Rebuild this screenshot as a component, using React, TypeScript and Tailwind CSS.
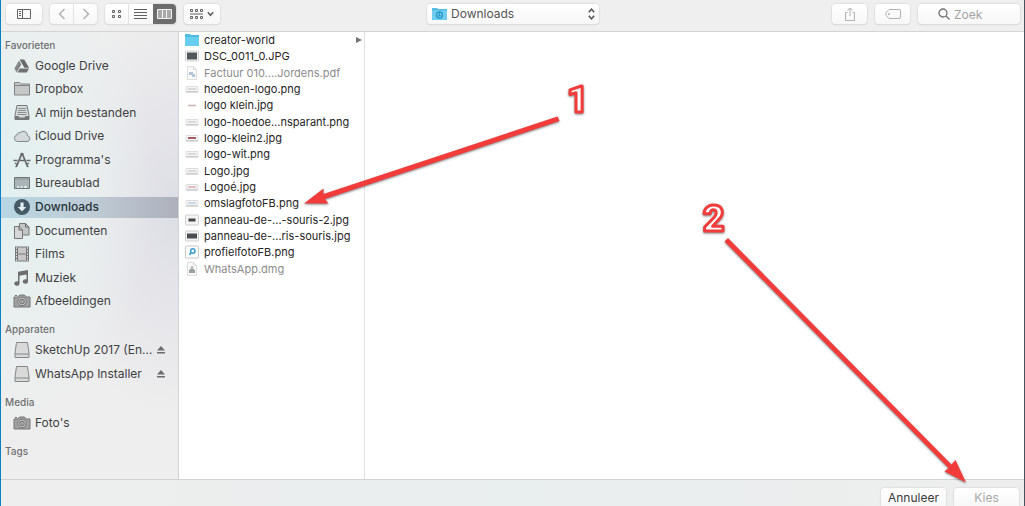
import { ReactNode, useState } from "react";
import clsx from "clsx";

const stroke = {
  fill: "none",
  stroke: "currentColor",
  strokeWidth: 1,
} as const;

const Icon = ({ children }: { children: ReactNode }) => (
  <svg width="18" height="18" viewBox="0 0 18 18" className="shrink-0 text-[#68696a]" aria-hidden="true">
    {children}
  </svg>
);

const DriveIcon = () => (
  <Icon>
    <path d="M6.6 2.5h4.6l4.9 8.3h-4.7z" fill="#68696a" />
    <path d="M6 3.4 1.4 11.4l2.3 4 4.7-8z" fill="#858687" />
    <path d="M6.8 11.6h9.2l-2.2 3.9H4.5z" fill="#707172" />
  </Icon>
);

const FolderIcon = () => (
  <Icon>
    <path d="M1.5 4V2.5h5L7.5 4h9v11h-15z" fill="#c6c7c7" stroke="#838484" />
    <path d="M1.5 5.5h15" {...stroke} stroke="#838484" />
  </Icon>
);

const TrayIcon = () => (
  <Icon>
    <path d="M4 1.500h10l2 10v4H2v-4z" fill="#d5dada" stroke="#757878" />
    <path d="M5 4.500h8M5 6.500h8M4.500 8.500h9M4.500 10.500h9" {...stroke} stroke="#8d9090" />
    <path d="M2 12h3.500l1 1.500h5l1-1.500H16v4H2z" fill="#757878" />
  </Icon>
);

const CloudIcon = () => (
  <Icon>
    <path
      d="M4.5 14.5a3.3 3.3 0 0 1-.6-6.5 2.4 2.4 0 0 1 3.1-2.2 4.3 4.3 0 0 1 7.600 3 2.900 2.900 0 0 1-.3 5.700z"
      fill="#d3d8d8"
      stroke="#858989"
    />
  </Icon>
);

const AppsIcon = () => (
  <Icon>
    <path d="M9 2 3.500 15.500M9 2l5.500 13.500" {...stroke} strokeWidth="1.800" />
    <path
      d="M.500 9.500h4M7 9.500h4.500M13.500 9.500h4M7.500 3h3M2 12l2 1.500M14 13.500l2-1.500M2.500 16l1.500-1M15.500 16 14 15"
      {...stroke}
      strokeWidth="1.400"
    />
  </Icon>
);

const DesktopIcon = () => (
  <Icon>
    <path d="M1.500 3.500h15v11h-15z" fill="#aab5b7" stroke="#6d7577" />
    <path d="M2 5h14" {...stroke} stroke="#899496" />
    <path d="M4 14v-2h2v2zM7.500 14v-2h2v2zM11 14v-2h3v2z" fill="#dce5e6" />
  </Icon>
);

const DownloadIcon = () => (
  <Icon>
    <circle cx="9" cy="9" r="8" fill="#455a65" />
    <path d="M7.400 4.500h3.200V9h2.600L9 13.600 4.800 9h2.600z" fill="#e1edf2" />
  </Icon>
);

const DocumentsIcon = () => (
  <Icon>
    <path d="M6.500 1.500h6l3.500 3.500v8H6.500z" fill="#c4c5c5" stroke="#777" />
    <path d="M12.500 1.500V5H16" {...stroke} />
    <path d="M1.500 4.500H6L9.500 8v8.500h-8z" fill="#d6d6d6" stroke="#777" />
    <path d="M6 4.500V8h3.500" {...stroke} />
  </Icon>
);

const FilmIcon = () => (
  <Icon>
    <path d="M2 1.500h14v15H2z" fill="#777" />
    <path d="M5 2.500h8v6H5zM5 9.500h8v6H5z" fill="#c8c8c8" />
    <path d="M3.500 2v14M14.500 2v14" {...stroke} stroke="#d5d5d5" strokeDasharray="2 1" />
  </Icon>
);

const MusicIcon = () => (
  <Icon>
    <path d="M5 2.800 15 1v11.500a2.600 2.200 0 1 1-1.500-2V5.500L6.500 6.800V14.500a2.600 2.200 0 1 1-1.500-2z" fill="#6d6d6d" />
  </Icon>
);

const CameraIcon = () => (
  <Icon>
    <path d="M1 5h4l1.500-2h5L13 5h4v10H1z" fill="#a2a2a2" stroke="#757575" />
    <circle cx="9" cy="9.500" r="4.300" fill="#c9c9c9" stroke="#707070" />
    <circle cx="9" cy="9.500" r="2.400" fill="#a5a5a5" stroke="#707070" />
    <path d="M2 3.500h2" {...stroke} />
  </Icon>
);

const DiskIcon = () => (
  <Icon>
    <path d="M3.500 1.500h11L16 12v4.500H2V12z" fill="#d9d9d9" stroke="#868686" strokeLinejoin="round" />
    <path d="M2 13h14" {...stroke} stroke="#868686" />
  </Icon>
);

interface Place {
  label: string;
  icon: ReactNode;
}

const favorites: Place[] = [
  { label: "Google Drive", icon: <DriveIcon /> },
  { label: "Dropbox", icon: <FolderIcon /> },
  { label: "Al mijn bestanden", icon: <TrayIcon /> },
  { label: "iCloud Drive", icon: <CloudIcon /> },
  { label: "Programma's", icon: <AppsIcon /> },
  { label: "Bureaublad", icon: <DesktopIcon /> },
  { label: "Downloads", icon: <DownloadIcon /> },
  { label: "Documenten", icon: <DocumentsIcon /> },
  { label: "Films", icon: <FilmIcon /> },
  { label: "Muziek", icon: <MusicIcon /> },
  { label: "Afbeeldingen", icon: <CameraIcon /> },
];

const devices: Place[] = [
  { label: "SketchUp 2017 (En...", icon: <DiskIcon /> },
  { label: "WhatsApp Installer", icon: <DiskIcon /> },
];

type Thumb = "folder" | "photo" | "pdf" | "logo" | "line" | "red" | "pink" | "blue" | "dark" | "wide" | "profile" | "dmg";

const files: { name: string; thumb: Thumb; disabled?: boolean }[] = [
  { name: "creator-world", thumb: "folder" },
  { name: "DSC_0011_0.JPG", thumb: "photo" },
  { name: "Factuur 010....Jordens.pdf", thumb: "pdf", disabled: true },
  { name: "hoedoen-logo.png", thumb: "logo" },
  { name: "logo klein.jpg", thumb: "line" },
  { name: "logo-hoedoe...nsparant.png", thumb: "logo" },
  { name: "logo-klein2.jpg", thumb: "red" },
  { name: "logo-wit.png", thumb: "logo" },
  { name: "Logo.jpg", thumb: "logo" },
  { name: "Logoé.jpg", thumb: "pink" },
  { name: "omslagfotoFB.png", thumb: "blue" },
  { name: "panneau-de-...-souris-2.jpg", thumb: "dark" },
  { name: "panneau-de-...ris-souris.jpg", thumb: "wide" },
  { name: "profielfotoFB.png", thumb: "profile" },
  { name: "WhatsApp.dmg", thumb: "dmg", disabled: true },
];

const strips: Partial<Record<Thumb, string>> = {
  logo: "#d0d0d0",
  red: "#8a2c32",
  pink: "#dfa9ad",
  blue: "#b9cfdc",
};

const FileThumb = ({ kind }: { kind: Thumb }) => (
  <svg width="14" height="14" viewBox="0 0 14 14" className="shrink-0 overflow-visible" aria-hidden="true">
    {kind === "folder" && (
      <>
        <path d="M0 2V1h5l1 1h8v11H0z" fill="#4ebbe2" />
        <path d="M0 4h14v9H0z" fill="#69cdf0" />
      </>
    )}
    {kind === "line" && <path d="M3 7.500h8" stroke="#c7b3b3" strokeWidth="1.500" />}
    {strips[kind] && (
      <>
        <rect x="1" y="4.500" width="12" height="5" rx="1" fill="#f6f6f6" stroke="#dcdcdc" />
        <path d="M3 7h8" stroke={strips[kind]} strokeWidth="1.500" />
        <path d="M1 10h12" stroke="#bdbdbd" />
      </>
    )}
    {(kind === "photo" || kind === "dark" || kind === "wide") && (
      <>
        <rect x=".500" y="2" width="13" height="10" rx="1" fill="#f4f4f4" stroke="#cfcfcf" />
        {kind === "photo" && <path d="M2 3.500h10v7H2z" fill="#50565c" />}
        {kind === "dark" && <path d="M3.500 5.500h7v3h-7z" fill="#45474a" />}
        {kind === "wide" && <path d="M2 4.500h10v5H2z" fill="#4b4e51" />}
      </>
    )}
    {(kind === "pdf" || kind === "dmg") && (
      <>
        <path d="M2.500.500h6l3 3v10h-9z" fill="#fafafa" stroke="#dcdcdc" />
        <path d="M8.500.500v3h3" fill="none" stroke="#dcdcdc" />
        {kind === "pdf" ? (
          <path d="M4 6h4v2h2v3H7V9H4z" fill="#b5c6d8" />
        ) : (
          <path d="M4 11V8.500l1-1.500h4l1 1.500V11zM5.500 6.500l.5-2h2l.5 2z" fill="#9ba19f" />
        )}
      </>
    )}
    {kind === "profile" && (
      <>
        <rect x=".5" y="1" width="13" height="12" rx="1" fill="#fafcfd" stroke="#c9c9c9" />
        <circle cx="7.800" cy="6" r="2.200" fill="none" stroke="#3b9cc9" strokeWidth="1.500" />
        <path d="m6 7.500-1.500 2.500" stroke="#3b9cc9" strokeWidth="1.500" />
      </>
    )}
  </svg>
);

const PlaceRow = ({
  place,
  selected,
  ejectable,
  onClick,
}: {
  place: Place;
  selected?: boolean;
  ejectable?: boolean;
  onClick?: () => void;
}) => (
  <li
    className={clsx(
      "flex h-[21px] items-center px-3",
      selected && "bg-linear-to-r from-[#b7d6e2] via-[#bfccd6] to-[#adb0bb]"
    )}
  >
    <button type="button" onClick={onClick} className="flex grow items-center gap-1 text-left">
      {place.icon}
      <span className={clsx("whitespace-nowrap", selected && "font-medium text-[#26323a]")}>{place.label}</span>
    </button>
    {ejectable && (
      <button type="button" aria-label={`Verwijder ${place.label}`}>
        <svg width="10" height="10" viewBox="0 0 10 10" fill="#6b6b6b">
          <path d="M5 1 9 5.500H1zM1 7h8v1.500H1z" />
        </svg>
      </button>
    )}
  </li>
);

const Heading = ({ children }: { children: ReactNode }) => (
  <h2 className="px-1 text-[10px] leading-4 font-medium text-[#6f7072]">{children}</h2>
);

const control = "h-5 rounded bg-linear-to-b from-white to-[#f7f7f7] shadow-[0_0_1px_1px_#e0e0e0,0_1px_1px_#c4c4c4]";
const center = "flex items-center justify-center";

const Toolbar = () => (
  <header className="grid h-8 grid-cols-[1fr_auto_1fr] items-start border-b border-[#d4d4d4] bg-[#efefef] pt-1 pr-1 pl-[5px]">
    <div className="flex gap-2">
      <button type="button" aria-label="Navigatiekolom" className={clsx(control, center, "w-[36px] text-[#636363]")}>
        <svg width="16" height="12" viewBox="0 0 16 12" {...stroke}>
          <path d="M1.500 1.500h13v9h-13zM6.500 1.500v9M3 3.500h2M3 5.500h2M3 7.500h2" />
        </svg>
      </button>
      <div className={clsx(control, "flex w-[47px] text-[#b0b0b0]")}>
        <button type="button" aria-label="Vorige" className={clsx(center, "flex-1 border-r border-[#e2e2e2]")}>
          <svg width="8" height="12" viewBox="0 0 8 12" {...stroke} strokeWidth="1.500">
            <path d="M6.500 1 1.500 6l5 5" />
          </svg>
        </button>
        <button type="button" aria-label="Volgende" className={clsx(center, "flex-1")}>
          <svg width="8" height="12" viewBox="0 0 8 12" {...stroke} strokeWidth="1.500">
            <path d="m1.500 1 5 5-5 5" />
          </svg>
        </button>
      </div>
      <div className={clsx(control, "flex w-[71px] overflow-hidden text-[#606060]")}>
        <button type="button" aria-label="Symbolen" className={clsx(center, "flex-1 border-r border-[#e2e2e2]")}>
          <svg width="11" height="10" viewBox="0 0 11 10" {...stroke}>
            <path d="M1.500 1.500h2v2h-2zM7.500 1.500h2v2h-2zM1.500 6.500h2v2h-2zM7.500 6.500h2v2h-2z" />
          </svg>
        </button>
        <button type="button" aria-label="Lijst" className={clsx(center, "flex-1")}>
          <svg width="13" height="10" viewBox="0 0 13 10" {...stroke}>
            <path d="M0 .500h13M0 3.500h13M0 6.500h13M0 9.500h13" />
          </svg>
        </button>
        <button type="button" aria-label="Kolommen" className={clsx(center, "flex-1 bg-[#6c6c6c]")}>
          <svg width="15" height="10" viewBox="0 0 15 10" fill="#a8a8a8" stroke="#f2f2f2">
            <path d="M.500.500h14v9H.500zM5.500.500v9M9.500.500v9" />
          </svg>
        </button>
      </div>
      <button type="button" aria-label="Groepeer" className={clsx(control, center, "w-[36px] gap-1 text-[#606060]")}>
        <svg width="13" height="12" viewBox="0 0 13 12" {...stroke}>
          <path d="M.500 1.500h2v2h-2zM5.500 1.500h2v2h-2zM10.500 1.500h2v2h-2zM.500 8.500h2v2h-2zM5.500 8.500h2v2h-2zM10.500 8.500h2v2h-2zM0 6h13" />
        </svg>
        <svg width="7" height="6" viewBox="0 0 7 6" {...stroke} strokeWidth="1.600">
          <path d="m.8 1.200 2.700 3 2.700-3" />
        </svg>
      </button>
    </div>

    <div className="relative">
      <select
        aria-label="Map"
        className={clsx(control, "block w-[172px] appearance-none pr-5 pl-6 text-[12px] leading-5 text-[#565656]")}
      >
        <option>Downloads</option>
      </select>
      <svg width="15" height="14" viewBox="0 0 15 14" className="pointer-events-none absolute top-[3px] left-[5px]">
        <path d="M0 1h5l1 1h9v11H0z" fill="#55bce2" />
        <path d="M0 3.500h15V13H0z" fill="#70cdee" />
        <circle cx="7.500" cy="8" r="3" fill="none" stroke="#2697c8" strokeWidth="1.300" />
        <path d="M7.500 6v3M6.300 8l1.200 1.300L8.700 8" fill="none" stroke="#2697c8" />
      </svg>
      <svg
        width="7"
        height="12"
        viewBox="0 0 7 12"
        className="pointer-events-none absolute top-1 right-1 text-[#555]"
        {...stroke}
        strokeWidth="1.500"
      >
        <path d="m.8 4.200 2.700-3 2.700 3M.8 7.800l2.700 3 2.700-3" />
      </svg>
    </div>

    <div className="flex justify-end gap-2 text-[#b0b0b0]">
      <button type="button" aria-label="Deel" className={clsx(control, center, "w-[35px]")}>
        <svg width="12" height="14" viewBox="0 0 12 14" {...stroke}>
          <path d="M3.500 5.500h-2v8h9v-8h-2M6 9V1M3.500 3.500 6 1l2.500 2.500" />
        </svg>
      </button>
      <button type="button" aria-label="Tags" className={clsx(control, center, "w-[35px]")}>
        <svg width="16" height="10" viewBox="0 0 16 10" {...stroke}>
          <path d="M4 .500h10q1.500 0 1.500 1.500v6q0 1.500-1.500 1.500H4L1.200 6.500Q.2 5 1.200 3.500z" />
          <circle cx="4" cy="5" r=".7" />
        </svg>
      </button>
      <div className="relative">
        <input
          type="text"
          aria-label="Zoek"
          placeholder="Zoek"
          className={clsx(control, "block w-[102px] pr-2 pl-9 text-[12px] text-[#555] placeholder:text-[#a3a3a3]")}
        />
        <svg
          width="12"
          height="12"
          viewBox="0 0 12 12"
          className="pointer-events-none absolute top-1 left-5 text-[#707070]"
          {...stroke}
          strokeWidth="1.300"
        >
          <circle cx="5" cy="5" r="4" />
          <path d="m8 8 3.500 3.500" />
        </svg>
      </div>
    </div>
  </header>
);

// Numbered steps drawn over the dialog
const Annotations = () => (
  <svg
    width="1025"
    height="506"
    viewBox="0 0 1025 506"
    className="pointer-events-none absolute top-0 -left-px font-[Roboto,sans-serif] text-[37px] font-black drop-shadow-[0_1px_1px_#00000080]"
  >
    <g fill="#f23c3c">
      <path d="M557.500 116.500 559.500 121 325 199 328.500 203.500 304 203.500 323.500 188.500 323.500 194z" />
      <path d="M724.500 241.500 728 238 951.500 464.500 955.500 460 966 482.500 944.500 471.500 948.500 468z" />
    </g>
    <g fill="#fff" stroke="#f23c3c" strokeWidth="3" strokeLinejoin="round">
      <text x="567" y="112">
        1
      </text>
      <text x="703" y="231">
        2
      </text>
    </g>
  </svg>
);

export default function App() {
  const [place, setPlace] = useState("Downloads");

  return (
    <div className="relative flex h-screen flex-col overflow-hidden border-r border-l border-r-[#48525c] border-l-[#0a80c2] bg-white font-[Inter,sans-serif] text-[#3f4143]">
      <Toolbar />

      <main className="flex min-h-0 grow">
        <nav className="w-[178px] shrink-0 border-r border-[#d2d3d5] bg-[#eeeeee] bg-[radial-gradient(ellipse_at_0%_33%,#e0f0ef_0%,#e9efef_30%,transparent_60%),radial-gradient(ellipse_at_100%_40%,#dddee5_0%,transparent_55%)] pt-[5px] text-[12px] leading-4">
          <Heading>Favorieten</Heading>
          <ul className="mt-0.5 flex h-[257px] flex-col justify-between">
            {favorites.map((item) => (
              <PlaceRow
                key={item.label}
                place={item}
                selected={item.label === place}
                onClick={() => setPlace(item.label)}
              />
            ))}
          </ul>
          <div className="mt-[9px]">
            <Heading>Apparaten</Heading>
          </div>
          <ul className="mt-0.5 flex flex-col gap-[3px]">
            {devices.map((item) => (
              <PlaceRow key={item.label} place={item} ejectable />
            ))}
          </ul>
          <div className="mt-[10px]">
            <Heading>Media</Heading>
          </div>
          <ul className="mt-0.5">
            <PlaceRow place={{ label: "Foto's", icon: <CameraIcon /> }} />
          </ul>
          <div className="mt-[10px]">
            <Heading>Tags</Heading>
          </div>
        </nav>

        <section className="w-[186px] shrink-0 border-r border-[#e0e0e0]">
          <ul className="flex h-[245px] flex-col justify-between text-[11px] leading-4 text-[#252525]">
            {files.map((file) => (
              <li key={file.name}>
                <button
                  type="button"
                  disabled={file.disabled}
                  className="flex h-4 w-full items-center gap-[5px] pr-0.5 pl-1.5 text-left whitespace-nowrap disabled:text-[#8c8c8c]"
                >
                  <FileThumb kind={file.thumb} />
                  <span className="grow">{file.name}</span>
                  {file.thumb === "folder" && (
                    <svg width="6" height="8" viewBox="0 0 6 8" fill="#737373">
                      <path d="M0 1v6l6-3z" />
                    </svg>
                  )}
                </button>
              </li>
            ))}
          </ul>
        </section>
      </main>

      <footer className="flex h-[27px] shrink-0 justify-end gap-2 border-t border-[#d2d2d2] bg-linear-to-r from-[#eeeeee] via-[#e9eeee] to-[#eeeeee] pt-2 pr-[5px] text-[12px]">
        <button type="button" className={clsx(control, "w-[65px] shrink-0 text-[#3c3c3c]")}>
          Annuleer
        </button>
        <button type="button" disabled className={clsx(control, "w-[65px] shrink-0 text-[#a8a8a8]")}>
          Kies
        </button>
      </footer>

      <Annotations />
    </div>
  );
}
